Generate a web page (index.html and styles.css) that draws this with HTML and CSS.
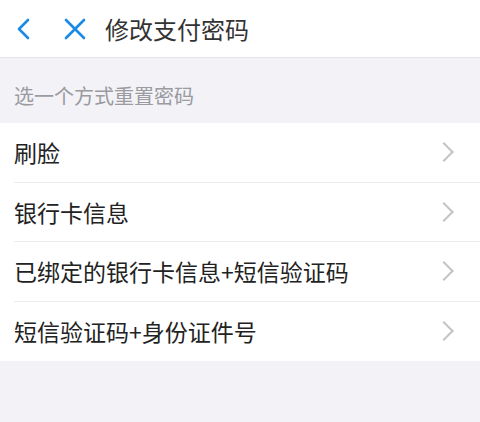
FILE: index.html
```html
<!DOCTYPE html>
<html lang="zh-CN">
<head>
  <meta charset="UTF-8" />
  <meta name="viewport" content="width=device-width, initial-scale=1.0" />
  <title>修改支付密码</title>
  <link rel="stylesheet" href="styles.css">
</head>
<body>
  <div class="header">
    <span class="nav-btn back">
      <svg width="14" height="22" viewBox="0 0 14 22"><path d="M12 2 L3 11 L12 20" fill="none" stroke="#1a8ae6" stroke-width="2.6" stroke-linecap="round" stroke-linejoin="round"/></svg>
    </span>
    <span class="nav-btn close">
      <svg width="22" height="22" viewBox="0 0 22 22"><path d="M2 2 L20 20 M20 2 L2 20" fill="none" stroke="#1a8ae6" stroke-width="2.6" stroke-linecap="round"/></svg>
    </span>
    <h1 class="title">修改支付密码</h1>
  </div>

  <div class="section-label">选一个方式重置密码</div>

  <ul class="options">
    <li class="option"><span>刷脸</span><i class="arrow"></i></li>
    <li class="option"><span>银行卡信息</span><i class="arrow"></i></li>
    <li class="option"><span>已绑定的银行卡信息+短信验证码</span><i class="arrow"></i></li>
    <li class="option"><span>短信验证码+身份证件号</span><i class="arrow"></i></li>
  </ul>
</body>
</html>
```

FILE: styles.css
```css
html,
body {
  margin: 0;
  height: 100%;
}

body {
  background: #f2f2f7;
  color: #222;
  font-family: "Noto Sans CJK SC", "Noto Sans", sans-serif;
}

.header {
  height: 57px;
  background: #fff;
  border-bottom: 1px solid #e6e6ea;
  display: flex;
  align-items: center;
}

.nav-btn {
  display: flex;
  align-items: center;
}

.back {
  margin-left: 16px;
}

.close {
  margin-left: 34px;
}

.title {
  margin: 0 0 0 19px;
  font-size: 24px;
  font-weight: normal;
  color: #333;
}

.section-label {
  height: 65px;
  padding: 10px 14px 0;
  display: flex;
  align-items: center;
  box-sizing: border-box;
  font-size: 20px;
  color: #9a9aa0;
}

.options {
  list-style: none;
  margin: 0;
  padding: 0 0 0 14px;
  background: #fff;
}

.option {
  height: 59.5px;
  display: flex;
  align-items: center;
  justify-content: space-between;
  padding-right: 25px;
  border-bottom: 1px solid #ececef;
  box-sizing: border-box;
  font-size: 23px;
}

.option:last-child {
  border-bottom: none;
}

.arrow {
  width: 12px;
  height: 12px;
  border-top: 2px solid #c4c4c8;
  border-right: 2px solid #c4c4c8;
  transform: rotate(45deg);
  margin-right: 4px;
}
```
